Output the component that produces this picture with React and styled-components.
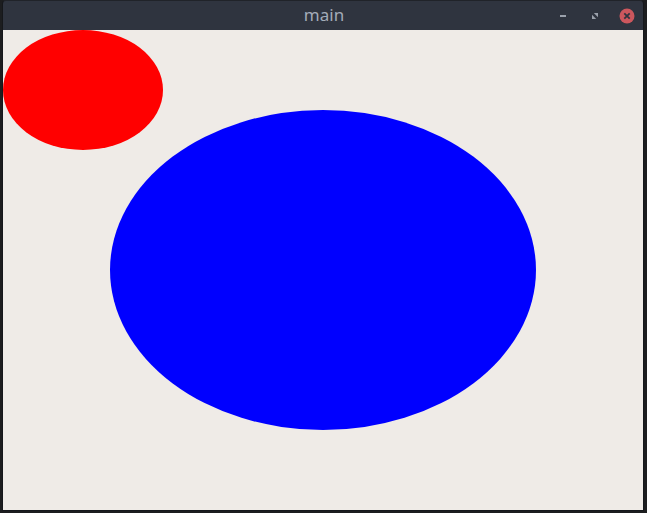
import React from "react";
import styled, { createGlobalStyle } from "styled-components";

const Global = createGlobalStyle`
  html, body { margin: 0; padding: 0; background: #1c1d1f; }
  body { width: 647px; height: 513px; overflow: hidden; font-family: "Noto Sans", "DejaVu Sans", sans-serif; }
`;

const Desktop = styled.div`
  width: 647px;
  height: 513px;
  background: #1c1d1f;
  display: flex;
  align-items: flex-start;
  padding-left: 2px;
  box-sizing: border-box;
`;

const Window = styled.div`
  width: 642px;
  height: 511px;
  display: flex;
  flex-direction: column;
  background: #2f343f;
  border-radius: 4px 4px 0 0;
  box-sizing: border-box;
  border: 1px solid #15171b;
  border-top-color: #202329;
`;

const TitleBar = styled.div`
  height: 29px;
  flex: none;
  display: grid;
  grid-template-columns: 1fr auto 1fr;
  align-items: center;
`;

const Title = styled.div`
  grid-column: 2;
  color: #a3abb8;
  font-size: 17px;
  line-height: 29px;
  transform: translate(1px, -1px);
`;

const Controls = styled.div`
  grid-column: 3;
  justify-self: end;
  display: flex;
  align-items: center;
  gap: 16px;
  padding-right: 8px;
`;

const Ctl = styled.div`
  width: 16px;
  height: 16px;
  display: flex;
  align-items: center;
  justify-content: center;
`;

const Content = styled.div`
  flex: 1;
  background: #efebe7;
  display: flex;
`;

const Canvas = styled.svg`
  display: block;
`;

export default function App() {
  return (
    <>
      <Global />
      <Desktop>
        <Window>
          <TitleBar>
            <Title>main</Title>
            <Controls>
              <Ctl>
                <svg width="16" height="16" viewBox="0 0 16 16">
                  <rect x="5" y="7" width="6" height="2" fill="#9ba1ac" />
                </svg>
              </Ctl>
              <Ctl>
                <svg width="16" height="16" viewBox="0 0 16 16">
                  <path d="M6.8 5 L11 5 L11 9.2 Z" fill="#9ba1ac" />
                  <path d="M5 6.8 L5 11 L9.2 11 Z" fill="#9ba1ac" />
                </svg>
              </Ctl>
              <Ctl>
                <svg width="16" height="16" viewBox="0 0 16 16">
                  <circle cx="8" cy="8" r="7.5" fill="#cc575d" />
                  <path d="M5.3 5.3 L10.7 10.7 M10.7 5.3 L5.3 10.7" stroke="#2f343f" strokeWidth="1.8" />
                </svg>
              </Ctl>
            </Controls>
          </TitleBar>
          <Content>
            <Canvas width="640" height="479" viewBox="0 0 640 479">
              <ellipse cx="80" cy="60" rx="80" ry="60" fill="#ff0000" />
              <ellipse cx="320" cy="240" rx="213" ry="160" fill="#0000ff" />
            </Canvas>
          </Content>
        </Window>
      </Desktop>
    </>
  );
}
